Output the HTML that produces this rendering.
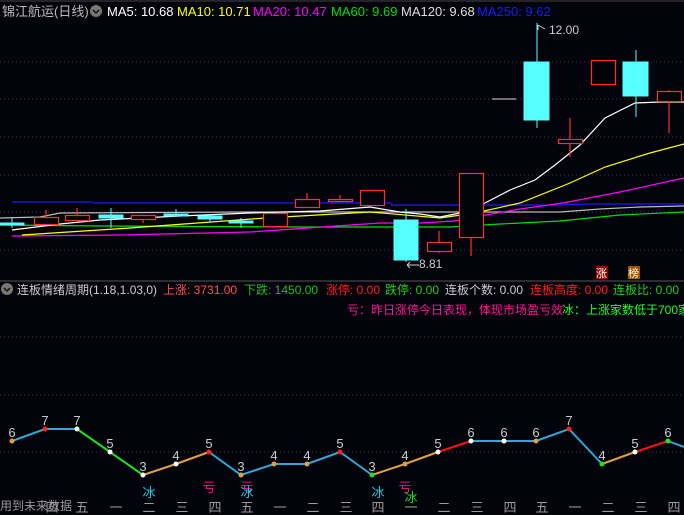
<!DOCTYPE html>
<html><head><meta charset="utf-8"><style>
html,body{margin:0;padding:0;background:#03030c;}
svg{display:block;font-family:"Liberation Sans","Noto Sans CJK SC",sans-serif;font-size:13px}
</style></head><body>
<svg width="684" height="515" viewBox="0 0 684 515" xmlns="http://www.w3.org/2000/svg">
<rect width="684" height="515" fill="#03030c"/>
<line x1="0" y1="1" x2="684" y2="1" stroke="#444" />
<g stroke="#3a3a44" stroke-dasharray="1,3">
<line x1="0" y1="62" x2="684" y2="62"/><line x1="0" y1="99" x2="684" y2="99"/>
<line x1="0" y1="137" x2="684" y2="137"/><line x1="0" y1="175" x2="684" y2="175"/>
<line x1="0" y1="212" x2="684" y2="212"/><line x1="0" y1="250" x2="684" y2="250"/>
<line x1="0" y1="337" x2="684" y2="337"/><line x1="0" y1="395" x2="684" y2="395"/>
<line x1="0" y1="452" x2="684" y2="452"/>
</g>
<line x1="0" y1="281" x2="684" y2="281" stroke="#555"/>
<g fill="none" stroke-width="1.2">
<polyline stroke="#1a1aff" points="12,202 92,202 95,203 390,203 392,205 560,205 590,204 684,204"/>
<polyline stroke="#bbbbbb" points="0,218 40,217 60,213 250,212 560,212 600,209 640,207 684,206"/>
<polyline stroke="#00e000" points="0,225 100,226 300,227 450,227 500,224 560,221 620,215 684,212"/>
<polyline stroke="#ff00ff" points="12,236 120,235 250,232 380,223 420,223 454,221 480,216 520,209 563,203 620,192 684,178"/>
<polyline stroke="#ffff00" points="22,235 130,228 265,218 370,212 440,218 475,213 520,203 570,183 605,167 650,153 684,144"/>
<polyline stroke="#ffffff" points="12,230 60,224 100,220 180,216 250,213 320,211 370,207 400,212 420,214 440,217 460,213 485,203 510,190 535,180 555,165 580,145 605,118 635,103 660,102 684,102"/>
</g>
<g stroke="#ff3030" fill="#03030c" stroke-width="1.2">
<line x1="46" y1="210" x2="46" y2="217"/><rect x="34.5" y="217.5" width="24" height="7"/>
<line x1="77" y1="208" x2="77" y2="215"/><rect x="65.5" y="215.5" width="24" height="5"/>
<line x1="143" y1="219" x2="143" y2="223"/><rect x="131.5" y="215.5" width="24" height="4"/>
<rect x="263.5" y="213.5" width="24" height="13"/>
<line x1="307" y1="193" x2="307" y2="199"/><rect x="295.5" y="199.5" width="24" height="8"/>
<line x1="340" y1="195" x2="340" y2="199"/><rect x="328.5" y="199.5" width="24" height="2"/>
<rect x="360.5" y="190.5" width="24" height="15"/>
<line x1="439" y1="231" x2="439" y2="253"/><rect x="427.5" y="242.5" width="24" height="9"/>
<line x1="471" y1="238" x2="471" y2="256"/><rect x="459.5" y="173.5" width="24" height="64"/>
<line x1="570" y1="118" x2="570" y2="157"/><rect x="558.5" y="139.5" width="24" height="4"/>
<rect x="591.5" y="60.5" width="24" height="24"/>
<line x1="669" y1="90" x2="669" y2="133"/><rect x="657.5" y="91.5" width="24" height="10"/>
</g>
<g fill="#55ffff" stroke="#55ffff">
<line x1="12" y1="218" x2="12" y2="228"/><rect x="0" y="223" width="24" height="2"/>
<line x1="111" y1="208" x2="111" y2="228"/><rect x="99" y="215" width="24" height="3"/>
<line x1="176" y1="209" x2="176" y2="216"/><rect x="164" y="214" width="24" height="2"/>
<line x1="210" y1="214" x2="210" y2="222"/><rect x="198" y="216" width="24" height="3"/>
<line x1="241" y1="218" x2="241" y2="228"/><rect x="229" y="221" width="24" height="2"/>
<line x1="406" y1="209" x2="406" y2="262"/><rect x="394" y="220" width="24" height="40"/>
<line x1="537" y1="23" x2="537" y2="128"/><rect x="524" y="62" width="25" height="58"/>
<line x1="636" y1="50" x2="636" y2="117"/><rect x="623" y="62" width="25" height="34"/>
</g>
<line x1="492" y1="99" x2="516" y2="99" stroke="#ddd"/>
<path d="M538 25 L538 30 M538 25 L545 29" stroke="#ccc" fill="none"/>
<text x="549" y="34" fill="#ccc" font-size="12">12.00</text>
<path d="M407 265 L419 265 M407 265 L410 262 M407 265 L410 268" stroke="#ccc" fill="none"/>
<text x="419" y="268" fill="#ccc" font-size="12">8.81</text>
<rect x="596" y="266" width="12" height="13" fill="#990000"/>
<text x="596" y="277" fill="#fff" font-size="11">涨</text>
<rect x="628" y="266" width="12" height="13" fill="#a05000"/>
<text x="628" y="277" fill="#fff" font-size="11">榜</text>
<text x="2" y="16" fill="#bbb">锦江航运(日线)</text>
<circle cx="96" cy="11" r="6" fill="#777"/><path d="M93 10 L96 13 L99 10" stroke="#111" fill="none" stroke-width="1.5"/>
<text x="107" y="16" fill="#fff">MA5: 10.68</text>
<text x="177" y="16" fill="#ffff00">MA10: 10.71</text>
<text x="253" y="16" fill="#ff00ff">MA20: 10.47</text>
<text x="331" y="16" fill="#00e000">MA60: 9.69</text>
<text x="401" y="16" fill="#ddd">MA120: 9.68</text>
<text x="477" y="16" fill="#1a1aff">MA250: 9.62</text>
<circle cx="7" cy="289" r="6" fill="#777"/><path d="M4 288 L7 291 L10 288" stroke="#111" fill="none" stroke-width="1.5"/>
<g font-size="12">
<text x="17" y="294" fill="#ccc">连板情绪周期(1.18,1.03,0)</text>
<text x="163" y="294" fill="#ff5050">上涨: 3731.00</text>
<text x="244" y="294" fill="#20c020">下跌: 1450.00</text>
<text x="326" y="294" fill="#ff2020">涨停: 0.00</text>
<text x="385" y="294" fill="#20d020">跌停: 0.00</text>
<text x="445" y="294" fill="#ccc">连板个数: 0.00</text>
<text x="530" y="294" fill="#ff2020">连板高度: 0.00</text>
<text x="613" y="294" fill="#20d020">连板比: 0.00</text>
<text x="347" y="314" fill="#ff1493">亏：昨日涨停今日表现，体现市场盈亏效</text>
<text x="562" y="314" fill="#20ff20">冰：上涨家数低于700家</text>
</g>
<g fill="none" stroke-width="2">
<polyline stroke="#2fa8d8" points="12,441 45,429 77,429"/>
<polyline stroke="#20e020" points="77,429 110,452 143,475"/>
<polyline stroke="#e0a040" points="143,475 176,464 209,452"/>
<polyline stroke="#2fa8d8" points="209,452 241,475 274,464 307,464 340,452 372,475"/>
<polyline stroke="#e0a040" points="372,475 405,464 438,452"/>
<polyline stroke="#ff1010" points="438,452 471,441"/>
<polyline stroke="#2fa8d8" points="471,441 504,441 536,441 569,429 602,464"/>
<polyline stroke="#e0a040" points="602,464 635,452"/>
<polyline stroke="#ff1010" points="635,452 668,441"/>
<polyline stroke="#2fa8d8" points="668,441 684,447"/>
</g>
<g fill="#fff">
<circle cx="12" cy="441" r="2.5" fill="#e0a040"/><circle cx="45" cy="429" r="2.5" fill="#ff2020"/><circle cx="77" cy="429" r="2.5"/>
<circle cx="110" cy="452" r="2.5"/><circle cx="143" cy="475" r="2.5"/><circle cx="176" cy="464" r="2.5"/>
<circle cx="209" cy="452" r="2.5" fill="#ff2020"/><circle cx="241" cy="475" r="2.5" fill="#e0a040"/><circle cx="274" cy="464" r="2.5" fill="#e0a040"/>
<circle cx="307" cy="464" r="2.5" fill="#e0a040"/><circle cx="340" cy="452" r="2.5" fill="#ff2020"/><circle cx="372" cy="475" r="2.5" fill="#20e020"/>
<circle cx="405" cy="464" r="2.5" fill="#e0a040"/><circle cx="438" cy="452" r="2.5"/><circle cx="471" cy="441" r="2.5"/>
<circle cx="504" cy="441" r="2.5"/><circle cx="536" cy="441" r="2.5" fill="#e0a040"/><circle cx="569" cy="429" r="2.5" fill="#ff2020"/>
<circle cx="602" cy="464" r="2.5" fill="#20e020"/><circle cx="635" cy="452" r="2.5"/><circle cx="668" cy="441" r="2.5" fill="#20e020"/>
</g>
<g fill="#ccc" text-anchor="middle">
<text x="12" y="437">6</text><text x="45" y="425">7</text><text x="77" y="425">7</text><text x="110" y="448">5</text>
<text x="143" y="471">3</text><text x="176" y="460">4</text><text x="209" y="448">5</text><text x="241" y="471">3</text>
<text x="274" y="460">4</text><text x="307" y="460">4</text><text x="340" y="448">5</text><text x="372" y="471">3</text>
<text x="405" y="460">4</text><text x="438" y="448">5</text><text x="471" y="437">6</text><text x="504" y="437">6</text>
<text x="536" y="437">6</text><text x="569" y="425">7</text><text x="602" y="460">4</text><text x="635" y="448">5</text><text x="668" y="437">6</text>
</g>
<g text-anchor="middle">
<text x="209" y="492" fill="#ff1493">亏</text><text x="247" y="492" fill="#ff1493">亏</text><text x="405" y="492" fill="#ff1493">亏</text>
<text x="149" y="497" fill="#20d0e0">冰</text><text x="247" y="497" fill="#20d0e0">冰</text><text x="378" y="497" fill="#20d0e0">冰</text>
<text x="411" y="502" fill="#20e020">冰</text>
</g>
<g fill="#999" text-anchor="middle">
<text x="52" y="512">四</text><text x="82" y="512">五</text><text x="116" y="512">一</text><text x="149" y="512">二</text>
<text x="182" y="512">三</text><text x="215" y="512">四</text><text x="247" y="512">五</text><text x="280" y="512">一</text>
<text x="313" y="512">二</text><text x="346" y="512">三</text><text x="378" y="512">四</text><text x="411" y="512">一</text>
<text x="444" y="512">二</text><text x="477" y="512">三</text><text x="510" y="512">四</text><text x="542" y="512">五</text>
<text x="575" y="512">一</text><text x="608" y="512">二</text><text x="641" y="512">三</text><text x="674" y="512">四</text>
</g>
<text x="0" y="510" fill="#999" font-size="12">用到未来数据</text>
</svg>
</body></html>
